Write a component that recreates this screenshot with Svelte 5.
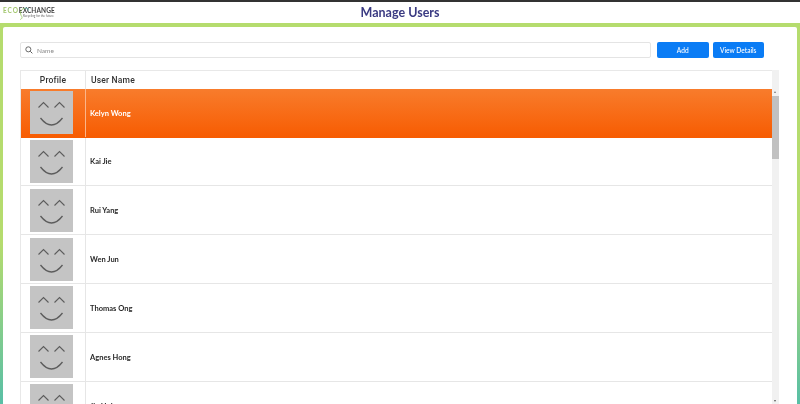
<script>
  const users = ["Kelyn Wong", "Kai Jie", "Rui Yang", "Wen Jun", "Thomas Ong", "Agnes Hong", "Jia Hui"];
  let selected = $state(0);
</script>

{#snippet face()}
  <svg class="avatar" viewBox="0 0 43 43" aria-hidden="true">
    <rect width="43" height="43" fill="#c4c4c4" />
    <path d="M8.500 16.500 L13.500 11.500 L18.500 16.500 M24.500 16.500 L29.500 11.500 L34.500 16.500" fill="none" stroke="#5c5c5c" stroke-width="1.100" />
    <path d="M10.500 27 Q21.500 41 32.500 27" fill="none" stroke="#5c5c5c" stroke-width="1.300" />
  </svg>
{/snippet}

<div class="page">
  <header class="topbar">
    <div class="logo">
      <svg class="swoosh" viewBox="0 0 20 18" aria-hidden="true">
        <path d="M13 2 C7 3 6 9 9 13 C10 15 9 16 7 17" fill="none" stroke="#8cc152" stroke-width="1" />
        <path d="M13 2 C16 1 18 3 18 5" fill="none" stroke="#3fa9a0" stroke-width="1" />
      </svg>
      <div class="logo-text">
        <div class="logo-name"><span class="eco">ECO</span><span class="ex">EXCHANGE</span></div>
        <div class="logo-tag">Recycling for the future</div>
      </div>
    </div>
    <h1>Manage Users</h1>
  </header>

  <main class="panel">
    <div class="toolbar">
      <label class="search">
        <svg viewBox="0 0 12 12" width="8" height="8" aria-hidden="true">
          <circle cx="5" cy="5" r="3.800" fill="none" stroke="#555" stroke-width="1.300" />
          <path d="M8 8 L11 11" stroke="#555" stroke-width="1.500" />
        </svg>
        <input placeholder="Name" />
      </label>
      <button>Add</button>
      <button>View Details</button>
    </div>

    <div class="table-wrap">
      <div class="table">
        <div class="row head">
          <div class="col-profile">Profile</div>
          <div class="col-name">User Name</div>
        </div>
        {#each users as user, i}
          <button class="row" class:active={selected === i} onclick={() => (selected = i)}>
            <div class="col-profile">{@render face()}</div>
            <div class="col-name">{user}</div>
          </button>
        {/each}
      </div>
      <div class="scrollbar">
        <span class="arrow up"></span>
        <span class="thumb"></span>
        <span class="arrow down"></span>
      </div>
    </div>
  </main>
</div>

<style>
  :global(body) {
    overflow: hidden;
  }

  .page {
    width: 800px;
    height: 404px;
    overflow: hidden;
    display: flex;
    flex-direction: column;
    border-top: 2px solid #333;
    box-sizing: border-box;
    font-family: Lato, "Open Sans", sans-serif;
    background: linear-gradient(180deg, #b5dc6e 0%, #b5dc6e 60%, #58bfa6 100%);
    will-change: transform;
  }

  .topbar {
    height: 21px;
    flex: none;
    background: #fff;
    display: flex;
    align-items: center;
    justify-content: center;
    position: relative;
  }

  h1 {
    margin: 0;
    font-size: 12.500px;
    font-weight: 700;
    color: #3a3a82;
    padding-bottom: 1px;
  }

  .logo {
    position: absolute;
    left: 3px;
    top: 3px;
    display: flex;
  }

  .swoosh {
    position: absolute;
    left: 12px;
    top: 1px;
    width: 15px;
    height: 15px;
  }

  .logo-text {
    line-height: 1;
  }

  .logo-name {
    font-size: 6.500px;
    font-weight: 700;
    padding-top: 3px;
  }

  .eco {
    color: #a3c76f;
    letter-spacing: 0.900px;
  }

  .ex {
    color: #444;
    letter-spacing: 0.100px;
  }

  .logo-tag {
    font-size: 3px;
    color: #666;
    margin-left: 20px;
  }

  .panel {
    flex: 1;
    min-height: 0;
    margin: 4px 3px 0;
    background: #fff;
    border-radius: 2px 2px 0 0;
    padding: 15px 17px 0;
    display: flex;
    flex-direction: column;
    gap: 12px;
  }

  .toolbar {
    display: flex;
    gap: 4px;
    width: 744px;
    height: 16px;
    flex: none;
  }

  .search {
    width: 631px;
    margin-right: 2px;
    box-sizing: border-box;
    border: 1px solid #e4e4e4;
    border-radius: 2px;
    display: flex;
    align-items: center;
    gap: 4px;
    padding-left: 4px;
  }

  .search input {
    border: 0;
    outline: 0;
    flex: 1;
    min-width: 0;
    padding: 0;
    font: 6.500px Lato, sans-serif;
    color: #333;
  }

  .search input::placeholder {
    color: #888;
  }

  .toolbar button {
    flex: 1;
    border: 0;
    border-radius: 2px;
    background: #0a7cf5;
    color: #fff;
    font: 500 6.600px Lato, sans-serif;
    padding: 0;
  }

  .table-wrap {
    flex: 1;
    min-height: 0;
    display: flex;
    overflow: hidden;
    width: 759px;
  }

  .table {
    width: 752px;
    flex: none;
    box-sizing: border-box;
    border: 1px solid #e8e8e8;
    border-bottom: 0;
    border-right: 0;
  }

  .row {
    display: flex;
    width: 100%;
    height: 48.850px;
    padding: 0;
    border: 0;
    border-bottom: 1px solid #e6e6e6;
    background: #fff;
    box-sizing: border-box;
    text-align: left;
    font: 700 7.500px Lato, sans-serif;
    color: #2a2a2a;
  }

  .row.head {
    height: 17.700px;
    border-bottom: 0;
    font: 500 8.500px Roboto, sans-serif;
    color: #333;
    letter-spacing: 0.2px;
  }

  .row.active {
    background: linear-gradient(180deg, #f87c2c 0%, #f75c02 100%);
    color: #fff;
    border-bottom-color: #f75c02;
  }

  .col-profile {
    width: 65px;
    flex: none;
    display: flex;
    align-items: center;
    justify-content: center;
    border-right: 1px solid #e6e6e6;
    box-sizing: border-box;
    padding-right: 3px;
  }

  .head .col-profile {
    padding-right: 0;
  }

  .active .col-profile {
    border-right-color: #fbb58a;
  }

  .col-name {
    flex: 1;
    display: flex;
    align-items: center;
    padding: 1px 0 0 4px;
  }

  .head .col-name {
    padding: 0 0 0 5px;
  }

  .avatar {
    width: 43px;
    height: 43px;
    display: block;
  }

  .scrollbar {
    width: 7px;
    flex: none;
    background: #f1f1f1;
    position: relative;
  }

  .thumb {
    position: absolute;
    left: 0;
    right: 0;
    top: 26px;
    height: 63px;
    background: #c1c1c1;
  }

  .arrow {
    position: absolute;
    left: 2px;
    width: 0;
    height: 0;
    border-left: 1.500px solid transparent;
    border-right: 1.500px solid transparent;
  }

  .arrow.up {
    top: 21px;
    border-bottom: 2px solid #777;
  }

  .arrow.down {
    bottom: 2px;
    border-top: 2px solid #555;
  }
</style>
